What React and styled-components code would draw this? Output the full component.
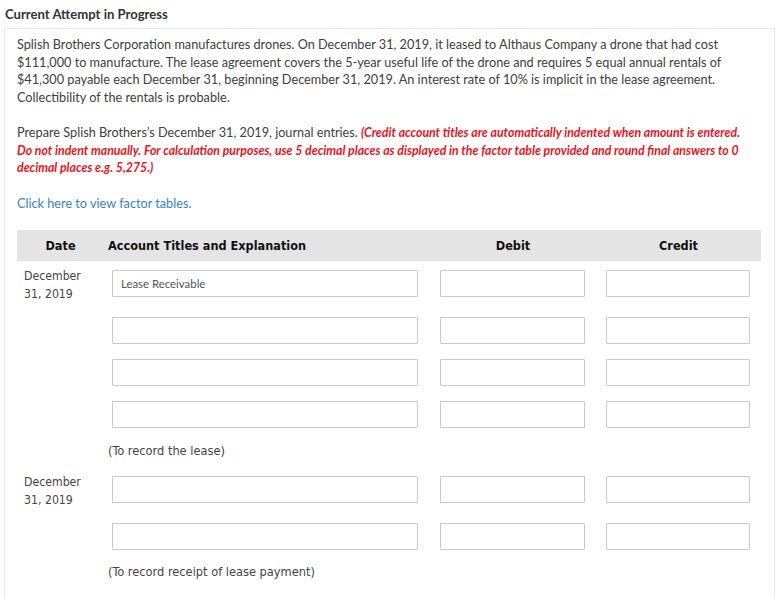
import React from "react";
import styled, { createGlobalStyle } from "styled-components";

const GlobalStyle = createGlobalStyle`
  html, body {
    margin: 0;
    padding: 0;
    background: #fff;
  }
  body {
    font-family: Lato, "Open Sans", sans-serif;
    color: #404040;
  }
`;

const Page = styled.div`
  width: 778px;
  min-height: 599px;
  background: #fff;
`;

const TitleBar = styled.div`
  height: 28px;
  padding: 0 5px;
  display: flex;
  align-items: center;
  font-family: Lato, sans-serif;
  font-weight: 700;
  font-size: 13.1px;
  color: #333;
`;

const Panel = styled.div`
  margin: 0 3px 0 4px;
  border: 1px solid #e9e9e9;
  border-bottom: none;
  padding: 7px 13px 20px 12px;
  min-height: 560px;
`;

const Para = styled.p`
  margin: 0 0 18px;
  font-size: 12.7px;
  line-height: 17.5px;
  color: #404040;
  white-space: nowrap;
`;

const Warn = styled.em`
  color: #e8141c;
  font-weight: 700;
  font-style: italic;
  font-size: 12.3px;
`;

const FactorLink = styled.a`
  display: block;
  margin: 0 0 18px;
  font-size: 12.7px;
  line-height: 17.5px;
  color: #3a7fc4;
  text-decoration: none;
  cursor: pointer;
`;

const cols = "87px 326px 166px 165px";

const HeadRow = styled.div`
  display: grid;
  grid-template-columns: ${cols};
  height: 31px;
  align-items: center;
  background: #e4e4e4;
  font-family: "DejaVu Sans Condensed", "DejaVu Sans", sans-serif;
  font-weight: 700;
  font-size: 12.6px;
  color: #111;
`;

const HeadCell = styled.div`
  text-align: ${(p) => (p.left ? "left" : "center")};
  padding-left: ${(p) => (p.left ? "4px" : "0")};
`;

const JournalRow = styled.div`
  display: grid;
  grid-template-columns: ${cols};
  align-items: start;
  font-family: "DejaVu Sans Condensed", "DejaVu Sans", sans-serif;
  font-size: 12.2px;
  color: #444;
`;

const DateCell = styled.div`
  padding: 6px 0 5px 7px;
  line-height: 18px;
`;

const InputCell = styled.div`
  padding: ${(p) => (p.wide ? "9px 12px 6px 8px" : "9px 11px 6px 10px")};
`;

const Field = styled.input`
  box-sizing: border-box;
  display: block;
  width: 100%;
  height: 27px;
  margin: 0;
  padding: 0 8px;
  border: 1px solid #c9c9c9;
  border-radius: 1px;
  background: #fff;
  font-family: Lato, sans-serif;
  font-size: 11.4px;
  color: #555;
  outline: none;
`;

const NoteRow = styled.div`
  padding: ${(p) => p.pad || "8px 0 7px"};
  padding-left: 91px;
  font-family: "DejaVu Sans Condensed", "DejaVu Sans", sans-serif;
  font-size: 12.7px;
  line-height: 18px;
  color: #444;
`;

function Entry({ date, account }) {
  return (
    <JournalRow>
      <DateCell>
        {date && (
          <>
            December
            <br />
            31, 2019
          </>
        )}
      </DateCell>
      <InputCell wide>
        <Field defaultValue={account || ""} />
      </InputCell>
      <InputCell>
        <Field />
      </InputCell>
      <InputCell>
        <Field />
      </InputCell>
    </JournalRow>
  );
}

export default function App() {
  return (
    <Page>
      <GlobalStyle />
      <TitleBar>Current Attempt in Progress</TitleBar>
      <Panel>
        <Para>
          Splish Brothers Corporation manufactures drones. On December 31, 2019, it leased to Althaus Company a drone that had cost
          <br />
          $111,000 to manufacture. The lease agreement covers the 5-year useful life of the drone and requires 5 equal annual rentals of
          <br />
          $41,300 payable each December 31, beginning December 31, 2019. An interest rate of 10% is implicit in the lease agreement.
          <br />
          Collectibility of the rentals is probable.
        </Para>
        <Para>
          Prepare Splish Brothers’s December 31, 2019, journal entries.{" "}
          <Warn>
            (Credit account titles are automatically indented when amount is entered.
            <br />
            Do not indent manually. For calculation purposes, use 5 decimal places as displayed in the factor table provided and round final answers to 0
            <br />
            decimal places e.g. 5,275.)
          </Warn>
        </Para>
        <FactorLink>Click here to view factor tables.</FactorLink>

        <HeadRow>
          <HeadCell>Date</HeadCell>
          <HeadCell left>Account Titles and Explanation</HeadCell>
          <HeadCell>Debit</HeadCell>
          <HeadCell>Credit</HeadCell>
        </HeadRow>

        <Entry date account="Lease Receivable" />
        <Entry />
        <Entry />
        <Entry />
        <NoteRow>(To record the lease)</NoteRow>

        <Entry date />
        <Entry />
        <NoteRow pad="7px 0 11px">(To record receipt of lease payment)</NoteRow>
      </Panel>
    </Page>
  );
}
